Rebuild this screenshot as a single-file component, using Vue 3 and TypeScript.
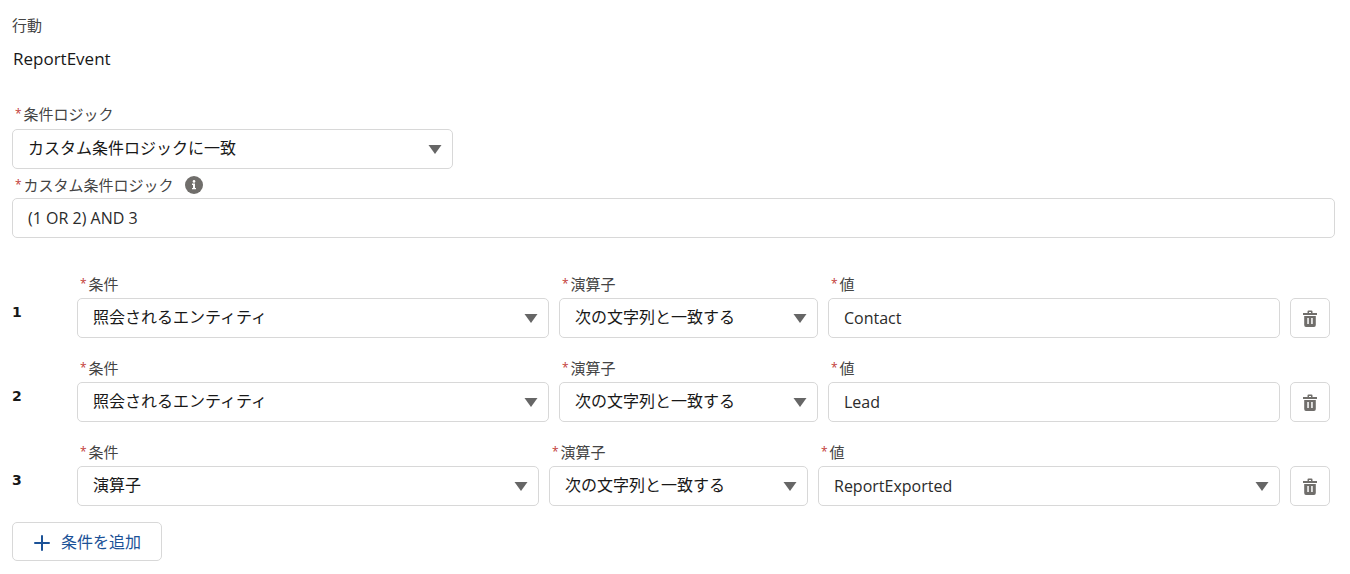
<script setup lang="ts">
import { ref } from 'vue'

interface Condition {
  id: number
  field: string
  operator: string
  value: string
  picklist: boolean
}

const logic = ref('カスタム条件ロジックに一致')
const customLogic = ref('(1 OR 2) AND 3')
const logicOptions = ['カスタム条件ロジックに一致', 'すべての条件に一致', 'いずれかの条件に一致']
const fieldOptions = ['照会されるエンティティ', '演算子']
const operatorOptions = ['次の文字列と一致する', '次の文字列と一致しない']
const valueOptions = ['ReportExported', 'ReportRun']

const conditions = ref<Condition[]>([
  { id: 1, field: '照会されるエンティティ', operator: '次の文字列と一致する', value: 'Contact', picklist: false },
  { id: 2, field: '照会されるエンティティ', operator: '次の文字列と一致する', value: 'Lead', picklist: false },
  { id: 3, field: '演算子', operator: '次の文字列と一致する', value: 'ReportExported', picklist: true },
])
let nextId = 4

function addCondition(): void {
  conditions.value.push({ id: nextId++, field: fieldOptions[0], operator: operatorOptions[0], value: '', picklist: false })
}

function removeCondition(id: number): void {
  conditions.value = conditions.value.filter((c) => c.id !== id)
}
</script>

<template>
  <main class="editor">
    <div class="caption">行動</div>
    <div class="event-name">ReportEvent</div>

    <div class="field logic">
      <label for="logic"><abbr>*</abbr>条件ロジック</label>
      <div class="select">
        <select id="logic" v-model="logic">
          <option v-for="o in logicOptions" :key="o">{{ o }}</option>
        </select>
        <svg class="arrow" viewBox="0 0 14 9" aria-hidden="true"><path d="M0.5 0h13L7 9z" /></svg>
      </div>
    </div>

    <div class="field custom">
      <div class="label-row">
        <label for="custom"><abbr>*</abbr>カスタム条件ロジック</label>
        <button class="info" type="button" aria-label="ヘルプ">
          <svg viewBox="0 0 18 18" aria-hidden="true">
            <circle cx="9" cy="9" r="9" fill="#706e6b" />
            <circle cx="9" cy="5.4" r="1.3" fill="#fff" />
            <path d="M7 7.6h3v4.3h1v1.3H7v-1.3h1V8.9H7z" fill="#fff" />
          </svg>
        </button>
      </div>
      <input id="custom" v-model="customLogic" type="text" />
    </div>

    <div class="rows">
      <div v-for="(c, i) in conditions" :key="c.id" class="row">
        <span class="number">{{ i + 1 }}</span>
        <div class="fields" :class="{ even: c.picklist }">
          <div class="field">
            <label :for="`field-${c.id}`"><abbr>*</abbr>条件</label>
            <div class="select">
              <select :id="`field-${c.id}`" v-model="c.field">
                <option v-for="o in fieldOptions" :key="o">{{ o }}</option>
              </select>
              <svg class="arrow" viewBox="0 0 14 9" aria-hidden="true"><path d="M0.5 0h13L7 9z" /></svg>
            </div>
          </div>
          <div class="field">
            <label :for="`operator-${c.id}`"><abbr>*</abbr>演算子</label>
            <div class="select">
              <select :id="`operator-${c.id}`" v-model="c.operator">
                <option v-for="o in operatorOptions" :key="o">{{ o }}</option>
              </select>
              <svg class="arrow" viewBox="0 0 14 9" aria-hidden="true"><path d="M0.5 0h13L7 9z" /></svg>
            </div>
          </div>
          <div class="field">
            <label :for="`value-${c.id}`"><abbr>*</abbr>値</label>
            <div v-if="c.picklist" class="select">
              <select :id="`value-${c.id}`" v-model="c.value" class="latin">
                <option v-for="o in valueOptions" :key="o">{{ o }}</option>
              </select>
              <svg class="arrow" viewBox="0 0 14 9" aria-hidden="true"><path d="M0.5 0h13L7 9z" /></svg>
            </div>
            <input v-else :id="`value-${c.id}`" v-model="c.value" type="text" />
          </div>
        </div>
        <button class="delete" type="button" aria-label="削除" @click="removeCondition(c.id)">
          <svg viewBox="0 0 14 17" aria-hidden="true">
            <path d="M4.5 3V1.5Q4.5 0.5 5.5 0.5h3Q9.5 0.5 9.5 1.5V3H14v2H0V3zM6 3h2V2H6z" fill="#706e6b" fill-rule="evenodd" />
            <path d="M1.2 6h11.6v9Q12.8 17 11 17H3Q1.2 17 1.2 15zM4.3 8v6h1.5V8zM8.2 8v6h1.5V8z" fill="#706e6b" fill-rule="evenodd" />
          </svg>
        </button>
      </div>
    </div>

    <button class="add" type="button" @click="addCondition">
      <svg viewBox="0 0 16 16" aria-hidden="true"><path d="M8 1v14M1 8h14" stroke="#1b5297" stroke-width="2" stroke-linecap="round" /></svg>
      <span>条件を追加</span>
    </button>
  </main>
</template>

<style>
body {
  margin: 0;
  background: #fff;
}
</style>

<style scoped>
.editor {
  padding: 15px 15px 13px 12px;
  font-family: "Open Sans", "Noto Sans CJK JP", sans-serif;
  font-size: 16px;
  line-height: 20px;
  color: #181818;
}
.caption {
  height: 20px;
  font-size: 15px;
  color: #444;
}
.event-name {
  margin-top: 14px;
  padding-left: 1px;
  font-size: 17px;
}
.field {
  min-width: 0;
}
label {
  display: block;
  height: 20px;
  padding-left: 3px;
  font-size: 15px;
  line-height: 20px;
  color: #444;
  white-space: nowrap;
}
abbr {
  margin-right: 2px;
  color: #c23934;
  font-size: 12px;
  line-height: 12px;
  vertical-align: 2px;
}
.logic {
  margin-top: 35px;
  width: 33.333%;
}
.logic .select {
  margin-top: 5px;
}
.custom {
  margin-top: 6px;
}
.label-row {
  display: flex;
  align-items: center;
  gap: 11px;
  height: 20px;
  margin-bottom: 3px;
}
.info {
  width: 18px;
  height: 18px;
  padding: 0;
  border: 0;
  background: none;
}
svg {
  display: block;
}
.info svg {
  width: 18px;
  height: 18px;
}
.select {
  position: relative;
}
select,
input {
  display: block;
  box-sizing: border-box;
  width: 100%;
  height: 40px;
  margin: 0;
  padding: 0 15px;
  border: 1px solid #d8d8d8;
  border-radius: 5px;
  background: #fff;
  color: #181818;
  font: inherit;
  appearance: none;
}
select {
  padding-bottom: 3px;
}
input,
select.latin {
  padding-bottom: 1px;
  color: #2b2b2b;
}
.arrow {
  position: absolute;
  top: 16px;
  right: 11px;
  width: 14px;
  height: 9px;
  fill: #666;
  pointer-events: none;
}
.rows {
  display: grid;
  gap: 20px;
  margin-top: 36px;
  padding-right: 5px;
}
.row {
  display: flex;
  align-items: flex-end;
  gap: 10px;
}
.number {
  width: 55px;
  margin-bottom: 16px;
  font-family: "DejaVu Sans", sans-serif;
  font-weight: 700;
  font-size: 14px;
}
.fields {
  flex: 1;
  display: grid;
  grid-template-columns: 472fr 259fr 452fr;
  gap: 10px;
}
.fields.even {
  grid-template-columns: 462fr 259fr 462fr;
}
.rows label {
  margin-bottom: 4px;
}
.delete {
  display: grid;
  place-items: center;
  width: 40px;
  height: 40px;
  padding: 0;
  border: 1px solid #d8d8d8;
  border-radius: 5px;
  background: #fff;
}
.delete svg {
  width: 14px;
  height: 17px;
}
.add {
  display: flex;
  align-items: center;
  gap: 11px;
  height: 39px;
  margin-top: 16px;
  padding: 0 20px 0 21px;
  border: 1px solid #d8d8d8;
  border-radius: 5px;
  background: #fff;
  color: #1b5297;
  font: inherit;
}
.add svg {
  width: 16px;
  height: 16px;
  margin-top: 2px;
}
</style>
